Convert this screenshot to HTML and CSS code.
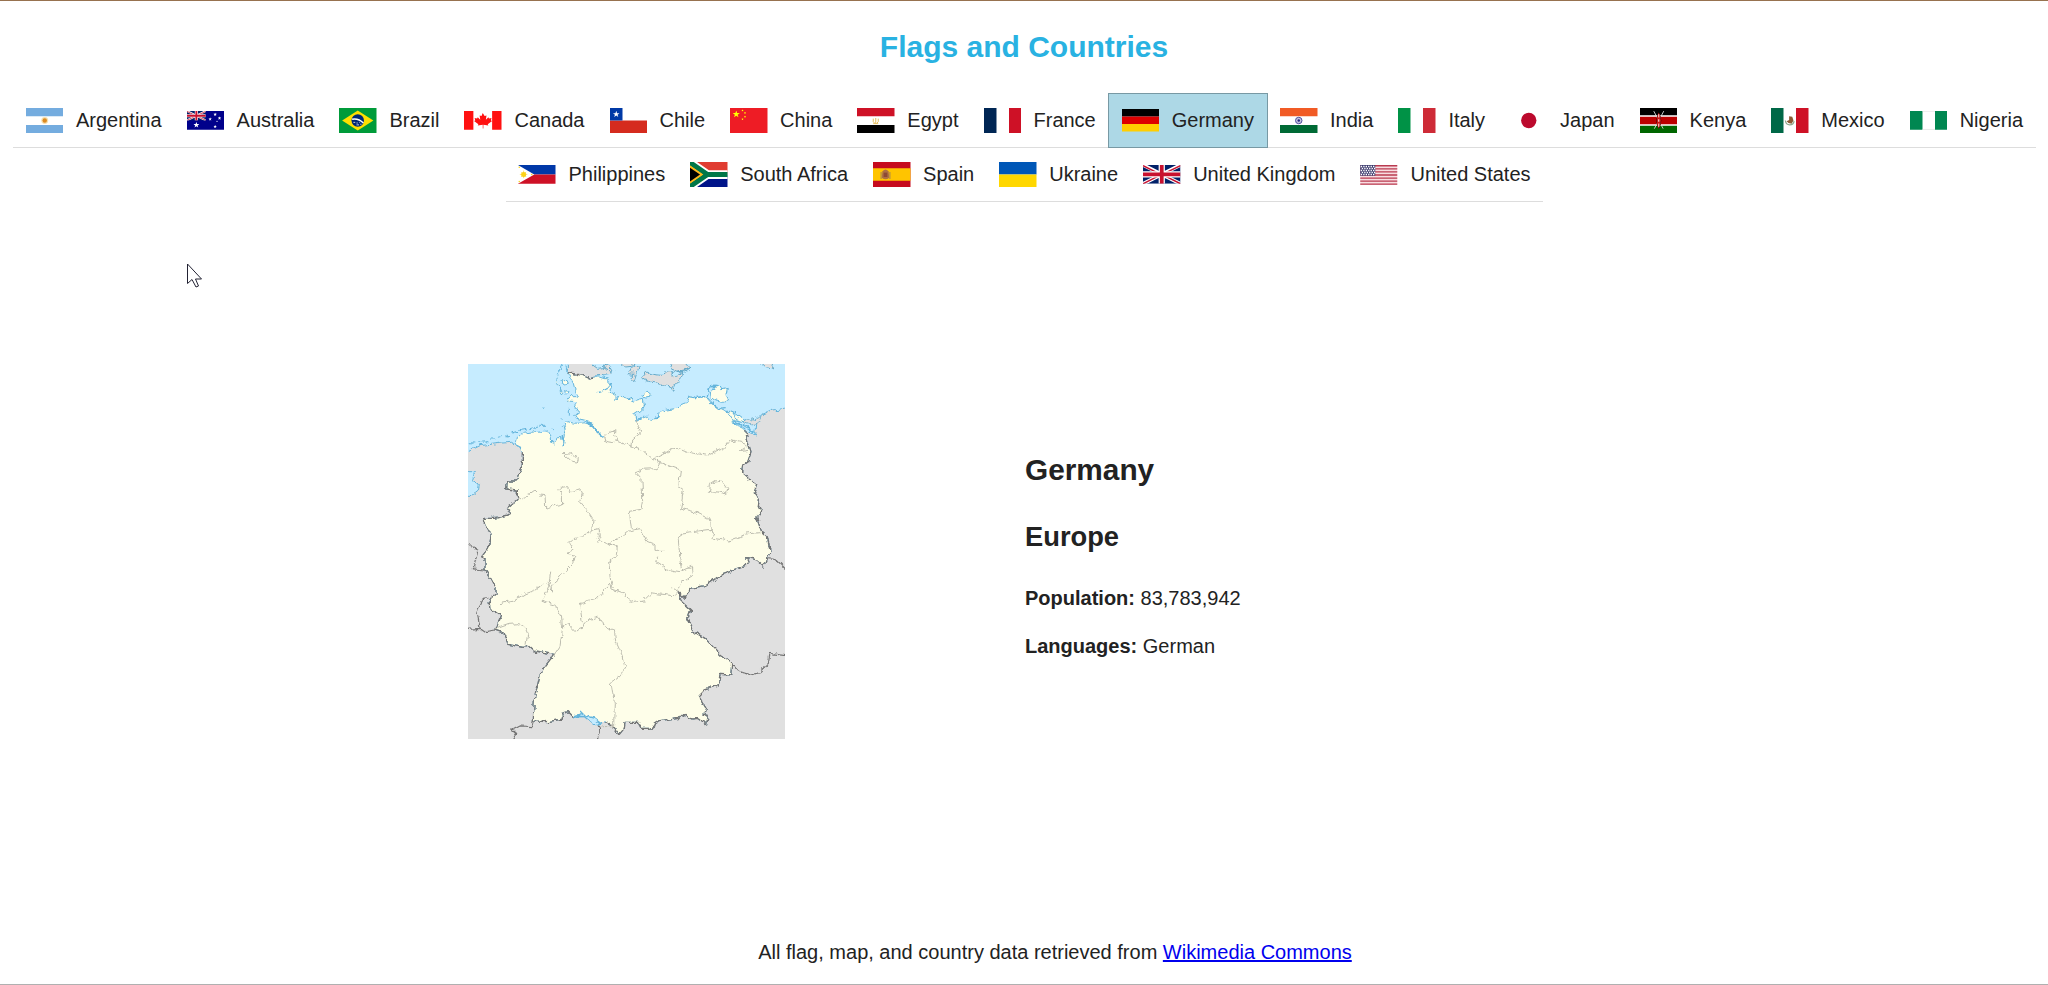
FILE: index.html
```html
<!DOCTYPE html>
<html lang="en">
<head>
<meta charset="utf-8">
<title>Flags and Countries</title>
<link rel="stylesheet" href="styles.css">
</head>
<body>
<svg class="defs" width="0" height="0">
  <symbol id="star" viewBox="-10 -10 20 20"><path d="M0-10 2.4-3.1 9.5-3.1 3.8 1.2 5.9 8.1 0 3.9-5.9 8.1-3.8 1.2-9.5-3.1-2.4-3.1z"/></symbol>
  <symbol id="jack" viewBox="0 0 60 30" preserveAspectRatio="none">
    <path fill="#012169" d="M0 0h60v30H0z"/>
    <path stroke="#fff" stroke-width="6" d="M0 0l60 30M60 0L0 30"/>
    <path stroke="#c8102e" stroke-width="2.4" d="M0 1l29 14.500M31 15.500l29 14.500M60 1L31 15M29 15.500L0 30"/>
    <path stroke="#fff" stroke-width="10" d="M30 0v30M0 15h60"/>
    <path stroke="#c8102e" stroke-width="6" d="M30 0v30M0 15h60"/>
  </symbol>
</svg>
<div class="page">
<header><h1 class="title">Flags and Countries</h1></header>
<nav>
<ul class="countries">
<li class="country"><svg class="flag" viewBox="0 0 60 40"><path fill="#74acdf" d="M0 0h60v40H0z"/><path fill="#fff" d="M0 13h60v14H0z"/><circle cx="30" cy="20" r="5.500" fill="#f8dfab"/><circle cx="30" cy="20" r="3.600" fill="#dc8a21"/></svg><span>Argentina</span></li>
<li class="country"><svg class="flag half" viewBox="0 0 60 30"><path fill="#00008b" d="M0 0h60v30H0z"/><use href="#jack" width="30" height="15"/><g fill="#fff"><use href="#star" x="10" y="17.500" width="10" height="10"/><use href="#star" x="42" y="2.500" width="6" height="6"/><use href="#star" x="34" y="10" width="6" height="6"/><use href="#star" x="49" y="8.500" width="6" height="6"/><use href="#star" x="42" y="22" width="6" height="6"/><circle cx="48" cy="16.500" r="1"/></g></svg><span>Australia</span></li>
<li class="country"><svg class="flag" viewBox="0 0 60 40"><path fill="#009b3a" d="M0 0h60v40H0z"/><path fill="#fedf00" d="M5 20 30 4l25 16-25 16z"/><circle cx="30" cy="20" r="10" fill="#002776"/><path d="M21 18q10-2 18 6" stroke="#fff" stroke-width="2.500" fill="none"/><path d="M23 23h3m2 1h2m-2 3h4m2-1h2m-4-3h1" stroke="#ccd4e3" stroke-width="1.500"/></svg><span>Brazil</span></li>
<li class="country"><svg class="flag half" viewBox="0 0 60 30"><path fill="#fff" d="M0 0h60v30H0z"/><path fill="#f11" d="M0 0h15v30H0zM45 0h15v30H45zM30 3l3 5 3-1-1 7 4-4 1 2 4-1-1 4 2 1-7 5 1 2-8-1v6h-1v-6l-8 1 1-2-7-5 2-1-1-4 4 1 1-2 4 4-1-7 3 1z"/></svg><span>Canada</span></li>
<li class="country"><svg class="flag" viewBox="0 0 60 40"><path fill="#fff" d="M0 0h60v20H0z"/><path fill="#d52b1e" d="M0 20h60v20H0z"/><path fill="#0039a6" d="M0 0h20v20H0z"/><use href="#star" x="4.500" y="4.500" width="11" height="11" fill="#fff"/></svg><span>Chile</span></li>
<li class="country"><svg class="flag" viewBox="0 0 60 40"><path fill="#ee1c25" d="M0 0h60v40H0z"/><g fill="#ff0"><use href="#star" x="4" y="4" width="12" height="12"/><use href="#star" x="18" y="2" width="4" height="4"/><use href="#star" x="22" y="6" width="4" height="4"/><use href="#star" x="22" y="12" width="4" height="4"/><use href="#star" x="18" y="16" width="4" height="4"/></g></svg><span>China</span></li>
<li class="country"><svg class="flag" viewBox="0 0 60 40"><path fill="#fff" d="M0 0h60v40H0z"/><path fill="#ce1126" d="M0 0h60v13H0z"/><path d="M0 27h60v13H0z"/><path d="M26 17v5l2 2M34 17v5l-2 2M30 16v9M26 25h8" stroke="#e5bd5c" stroke-width="1.600" fill="none"/></svg><span>Egypt</span></li>
<li class="country"><svg class="flag" viewBox="0 0 60 40"><path fill="#fff" d="M0 0h60v40H0z"/><path fill="#002654" d="M0 0h20v40H0z"/><path fill="#ce1126" d="M40 0h20v40H40z"/></svg><span>France</span></li>
<li class="country selected"><svg class="flag fifths" viewBox="0 0 60 36"><path d="M0 0h60v12H0z"/><path fill="#d00" d="M0 12h60v12H0z"/><path fill="#ffce00" d="M0 24h60v12H0z"/></svg><span>Germany</span></li>
<li class="country"><svg class="flag" viewBox="0 0 60 40"><path fill="#fff" d="M0 0h60v40H0z"/><path fill="#f15b25" d="M0 0h60v13H0z"/><path fill="#006a35" d="M0 27h60v13H0z"/><circle cx="30" cy="20" r="5.200" fill="#c5c3df" stroke="#4a4a9c" stroke-width="1.500"/><circle cx="30" cy="20" r="2" fill="#262680"/></svg><span>India</span></li>
<li class="country"><svg class="flag" viewBox="0 0 60 40"><path fill="#fff" d="M0 0h60v40H0z"/><path fill="#009246" d="M0 0h20v40H0z"/><path fill="#ce2b37" d="M40 0h20v40H40z"/></svg><span>Italy</span></li>
<li class="country"><svg class="flag" viewBox="0 0 60 40"><path fill="#fff" d="M0 0h60v40H0z"/><circle cx="30" cy="20" r="12.300" fill="#bc0a2d"/></svg><span>Japan</span></li>
<li class="country"><svg class="flag" viewBox="0 0 60 40"><path d="M0 0h60v13H0z"/><path fill="#fff" d="M0 11.500h60v17H0z"/><path fill="#b00" d="M0 14h60v12H0z"/><path fill="#060" d="M0 28.500h60V40H0z"/><path d="M22 5l15 28M38 5L23 33" stroke="#ddd" stroke-width="1.400"/><path d="M30 7q4 6 4 13t-4 13q-4-6-4-13t4-13z"/><path fill="#c81414" d="M30 7q3.500 6 3.500 13t-3.500 13q-3.500-6-3.500-13t3.500-13z"/><path d="M30 10v5m0 3v4m0 3v5" stroke="#fff" stroke-width="1.500"/></svg><span>Kenya</span></li>
<li class="country"><svg class="flag" viewBox="0 0 60 40"><path fill="#fff" d="M0 0h60v40H0z"/><path fill="#006847" d="M0 0h20v40H0z"/><path fill="#ce1126" d="M40 0h20v40H40z"/><path fill="#8b5a34" d="M29 13l5 1 2 6-3 5-5-1-3-3 4-2z"/><path d="M23 20q1 7 7 7t7-6" fill="none" stroke="#8da78c" stroke-width="2"/></svg><span>Mexico</span></li>
<li class="country"><svg class="flag half" viewBox="0 0 60 30"><path fill="#fff" d="M0 0h60v30H0z"/><path fill="#008751" d="M0 0h20v30H0zM40 0h20v30H40z"/><path d="M20 .5h20M20 29.500h20" stroke="#ddd"/></svg><span>Nigeria</span></li>
<li class="country"><svg class="flag half" viewBox="0 0 60 30"><path fill="#0038a8" d="M0 0h60v15H0z"/><path fill="#ce1126" d="M0 15h60v15H0z"/><path fill="#fff" d="M0 0l26 15L0 30z"/><g fill="#fcd116"><circle cx="9" cy="15" r="4"/><path d="M9 9v12M3 15h12M5 11l8 8M13 11l-8 8" stroke="#fcd116"/><circle cx="2" cy="3.500" r="1.200"/><circle cx="2" cy="26.500" r="1.200"/><circle cx="22" cy="15" r="1.200"/></g></svg><span>Philippines</span></li>
<li class="country"><svg class="flag" viewBox="0 0 60 40"><path fill="#e03c31" d="M0 0h60v20H0z"/><path fill="#001489" d="M0 20h60v20H0z"/><path d="M-4-2 28 20h32M-4 42 28 20" fill="none" stroke="#fff" stroke-width="14"/><path fill="#ffb81c" d="M0 4l23 16L0 36z"/><path d="M-4-2 28 20h32M-4 42 28 20" fill="none" stroke="#007749" stroke-width="8"/><path fill="#ffb81c" d="M0 5.500 21 20 0 34.500z"/><path d="M0 9l16 11L0 31z"/></svg><span>South Africa</span></li>
<li class="country"><svg class="flag" viewBox="0 0 60 40"><path fill="#c60b1e" d="M0 0h60v40H0z"/><path fill="#ffc400" d="M0 10h60v20H0z"/><path fill="#ad7043" d="M15 15q5-6 10 0l1 10q-6 5-12 0z"/><path d="M13 16v11M27 16v11" stroke="#b38d45" stroke-width="2"/><path fill="#8d4a34" d="M17 17h6v7h-6z"/></svg><span>Spain</span></li>
<li class="country"><svg class="flag" viewBox="0 0 60 40"><path fill="#0057b7" d="M0 0h60v20H0z"/><path fill="#ffd700" d="M0 20h60v20H0z"/></svg><span>Ukraine</span></li>
<li class="country"><svg class="flag half" viewBox="0 0 60 30"><use href="#jack" width="60" height="30"/></svg><span>United Kingdom</span></li>
<li class="country"><svg class="flag states" viewBox="0 0 74 40"><path fill="#f8dce0" d="M0 0h74v40H0z"/><path d="M0 1.500h74M0 7.600h74M0 13.700h74M0 20h74M0 26.100h74M0 32.200h74M0 38.400h74" stroke="#b93b50" stroke-width="2.600"/><path fill="#3c3b6e" d="M0 0h30v21.500H0z"/><path d="M1 3h29M3 7h27M1 11h29M3 15h27M1 19h29" stroke="#fff" stroke-width="2.600" stroke-dasharray="2.700 2.200"/></svg><span>United States</span></li>
</ul>
</nav>
<main class="details">
<div class="map-column">
<svg class="map" viewBox="24 27 951 1125">
  <defs>
    <filter id="rough" x="0" y="0" width="1" height="1" filterUnits="objectBoundingBox" color-interpolation-filters="sRGB"><feTurbulence type="fractalNoise" baseFrequency=".055" numOctaves="3" seed="4"/><feColorMatrix values="1 0 0 0 0 0 1 0 0 0 0 0 1 0 0 0 0 0 0 1" result="noise"/><feDisplacementMap in="SourceGraphic" in2="noise" scale="17" xChannelSelector="R" yChannelSelector="G"/></filter>
  </defs>
  <path fill="#e0e0e0" d="M24 27h951v1125H24z"/>
  <g filter="url(#rough)" stroke-linejoin="round">
    <path fill="#e0e0e0" d="M-20-20h1050v1220H-20z"/>
    <g fill="#c6ecff" stroke="#63b4db" stroke-width="3">
      <path d="M-20-20H1020V153L975 160 940 165 905 181 890 207 887 240 850 225 600 400 187 290 175 275 155 262 125 264 95 268 60 272 24 290-20 310z"/>
      <path d="M0 350H44L37 378 58 388 55 405 24 430H0z"/>
    </g>
    <g fill="#e0e0e0" stroke="#63a9c9" stroke-width="3">
      <path d="M325-10V53L385 69 405 63 430 61 455 57 450 45 432 38 412 40 398 30 400-10z"/>
      <path d="M430 27l18 4 10 18-20-8zM478 18l18 18 20-2 15-12zM527 32l11 0-16 48-8-8 8-14-18-2 8-16zM545 69l15-18 22 8 22 2 12-10 22-1-4 13 16-2 18-12-4 20-18 18-8 19-8-14-26-3-20-6-32-8zM622 18l12 24 20 8 22-4 16-6-20-22zM655 48l38-8-16 11zM897 20l20 18 20 4 5-22z"/>
    </g>
    <path fill="#e0e0e0" stroke="#63a9c9" stroke-width="2.500" d="M850 194l20 2 37-15-12 24-24 5-20-8z"/>
    <path fill="#fefee9" stroke="#63b4db" stroke-width="3" d="M323 53 345 57 365 60 385 69 400 66 420 66 440 72 452 85 455 100 447 112 468 118 468 138 475 125 495 125 520 138 550 130 553 150 545 165 525 178 528 200 545 190 565 183 575 193 590 190 600 172 620 165 650 160 660 150 680 142 688 120 705 128 740 125 755 142 775 158 795 168 815 175 820 200 835 212 857 222 862 255 873 290 862 320 848 330 845 350 870 372 890 388 882 410 898 430 895 455 903 470 890 490 905 530 922 545 928 575 930 590 918 622 908 633 885 612 860 608 865 620 855 632 790 655 735 692 690 700 672 727 655 710 665 740 692 765 683 790 705 832 735 850 780 898 815 925 812 960 780 958 775 990 735 1002 715 1022 737 1058 732 1078 745 1082 740 1110 715 1090 695 1092 665 1078 655 1090 600 1100 570 1120 545 1120 535 1102 495 1102 493 1120 478 1138 460 1115 435 1100 415 1112 375 1085 340 1085 325 1070 305 1075 308 1092 265 1100 220 1098 223 1030 240 960 250 940 283 898 225 888 205 870 190 877 143 868 127 832 107 825 122 782 90 760 87 735 108 715 108 700 92 670 75 645 75 615 65 605 85 580 90 565 93 540 78 510 70 490 105 490 145 480 152 465 140 460 172 433 172 405 140 402 142 378 172 378 187 330 187 292 180 277 168 271 172 250 190 235 260 225 270 240 272 262 285 267 292 245 305 245 310 272 316 240 310 215 320 200 350 205 380 203 385 198 350 190 344 180 355 172 342 152 352 140 320 138 330 125 355 125 345 105 340 85z"/>
    <g fill="#fefee9" stroke="#63b4db" stroke-width="3">
      <path d="M550 112l10-5 16 15-18 4-12-3zM762 90l15 4 5 10 20-4-4 20 8 14-16 8-22-4-15-10 2-18zM800 168l28 8 25 18-8 8-28-8z"/>
      <path d="M303 78l15-2 4 9-16 3zM300 98l8 18-6 4zM314 106l8-2 6 8-12 2zM292 62l-2 24 6 10M318 32l4 18M306 30l-14 28"/>
      <path d="M24 263l22 1M55 262l30-2M88 252l15 0M113 247l15-3M137 242l6-4 3 5zM153 235l18-6M178 227l22-4M208 221l24-5M238 214l20 0M275 222l6 2M250 156l6 1M303 190l4 4M328 160v22"/>
    </g>
    <path fill="none" stroke="#63b4db" stroke-width="7" d="M375 201l20 8 16 20 20 17"/>
    <path fill="none" stroke="#63b4db" stroke-width="4" d="M412 114l28-12 15-18M310 240v35M527 198l14-10M586 192l10-16M742 124l8-28 22-6M685 125l18 3 35-4M750 140l25 20 25-2M808 168l18 12 8 20M815 200l34 12 38 20"/>
    <path fill="none" stroke="#747474" stroke-width="4" d="M323 53 345 57 365 60 385 69 400 66M857 222 862 255 873 290 862 320 848 330 845 350 870 372 890 388 882 410 898 430 895 455 903 470 890 490 905 530 922 545 928 575 930 590 918 622 908 633 885 612 860 608 865 620 855 632 790 655 735 692 690 700 672 727 655 710 665 740 692 765 683 790 705 832 735 850 780 898 815 925 812 960 780 958 775 990 735 1002 715 1022 737 1058 732 1078 745 1082 740 1110 715 1090 695 1092 665 1078 655 1090 600 1100 570 1120 545 1120 535 1102 495 1102 493 1120 478 1138 460 1115 435 1100M340 1085 325 1070 305 1075 308 1092 265 1100 220 1098 223 1030 240 960 250 940 283 898 225 888 205 870 190 877 143 868 127 832 107 825 122 782 90 760 87 735 108 715 108 700 92 670 75 645 75 615 65 605 85 580 90 565 93 540 78 510 70 490 105 490 145 480 152 465 140 460 172 433 172 405 140 402 142 378 172 378 187 330 187 292"/>
    <path fill="none" stroke="#747474" stroke-width="3.500" d="M0 568l30 2 24 16-14 56 35 3M87 727l-17 3-20 35 10 55 15 10 32-5M0 825l60-5M220 1098l-5 17-35-2-22 12 12 10-20 30M415 1112l5 18-15 40M815 925l20 23 30 10 35-8 25-25 5-30 70 10M918 610l32 5 25 25 30 10"/>
    <g fill="none" stroke="#bcbcaf" stroke-width="3">
      <path d="M433 243l20-14 15-8-2 18 8 16-12 8-24-4zM310 295l20 2 25 14-3 10-17-2zM748 412l3-24 16-10 18-3 18 25-3 17-20-5-14-2z"/>
      <path d="M473 255l40 18 30 12 34 28 30-14 38-22 34 14 60 10 50-20 22-27 42 10 8 14-20 12 24-4M513 273l2-18 28-22-15-38M577 313l24 10 60 22-5 52 14 10-8 52 45 12 45 24 2 28-92 11-7 20 5 60 4 24M601 323l-12 18-45 2-20 8 22 24 2 60-5 28-35 6 6 50"/>
      <path d="M172 433l25-8 28-20 12 12 18 2 2 40 48-12-2-40-10-2 8-8 22-2 8 18 30-10 6 10-8 28 20 24 20 30-4 30-24 20-32 6-12 12 12 20-18 12 20 4 4 12-8 15-20 20-22 26-20 18 4 22-18-34-38 28-28 10-35 22-40 8"/>
      <path d="M395 525l22-4 4 20-8 16 28 8 40-18 24-18 12-4 24-4 20 38 24 10 0 20 30 0M440 565l32 10-4 30-22 15 6 60 4 22 35 12 18 28 45-8 20-20 65 8 20-20 4-20 35-20-4-28-34 16-35-6-38-24 6-15M752 520l8 30 50 8 28-10 20-14 40-4"/>
      <path d="M272 650l-6 44-20 45 40 12 18 30 4 40-8 52-20 30M107 822l40-14 30-2 18 12 8 18-5 34M304 812l20-8 20 22 25-10-10-70 50-14 25-30 22-20M365 818l20-24 30-8 16 24 16 10 16 6 4 32 18 40 10 40-14 22-28 22 10 64-2 65-40 6M637 698l18 12"/>
    </g>
    <path fill="#c6ecff" stroke="#63b4db" stroke-width="4" d="M360 1065l18 18 26 6 24 18-26 2-30-25-30 2 25-8z"/>
  </g>
</svg>
</div>
<section class="facts">
<h2 class="name">Germany</h2>
<h3 class="region">Europe</h3>
<p class="fact"><b>Population:</b> 83,783,942</p>
<p class="fact"><b>Languages:</b> German</p>
</section>
</main>
<footer class="credit">All flag, map, and country data retrieved from <a href="#">Wikimedia Commons</a></footer>
</div>
<svg class="pointer" viewBox="0 0 16 25"><path d="M.5 1v19.500l4.500-4 4 7.500 2.500-1-3-7h6z" fill="#fff" stroke="#222233"/></svg>
</body>
</html>
```
FILE: styles.css
```css
* { box-sizing: border-box; }
body { margin: 0; background: #fff; color: #222; font: 20px/23px "Liberation Sans", Arial, sans-serif; }
.defs { position: absolute; }
.page { height: 985px; display: flex; flex-direction: column; border-top: 1px solid #97724f; border-bottom: 1px solid #b0b0b0; overflow: hidden; }
.title { margin: 29px 0 0; font-size: 30px; line-height: 34px; text-align: center; color: #29b2e2; }
.countries { display: flex; flex-wrap: wrap; justify-content: center; margin: 29px 11.5px 0 12.5px; padding: 0; list-style: none; }
.country { display: flex; align-items: center; gap: 12.5px; padding: 15px 12.5px; height: 54px; border-bottom: 1px solid #ddd; white-space: nowrap; }
.selected { height: 55px; background: #add8e6; border: 1px solid #7899a4; }
.country:not(.selected):nth-child(-n+15) { height: 55px; padding-top: 16px; }
.flag { display: block; flex: none; width: 37.5px; height: 25px; }
.half { height: 18.75px; }
.fifths { height: 22.5px; }
.states { height: 20px; }
.details { display: flex; margin-top: 162px; }
.map-column { width: 1025px; padding-left: 468px; }
.map { display: block; width: 317px; height: 375px; }
.facts { padding-top: 89px; }
.name { margin: 0; font-size: 29.8px; line-height: 34px; }
.region { margin: 34px 0 0; font-size: 27.3px; line-height: 32px; }
.fact { margin: 34px 0 0; }
.fact + .fact { margin-top: 25px; }
.credit { margin-top: auto; padding: 0 0 20px 62px; text-align: center; }
.credit a { color: #00e; }
.pointer { position: absolute; left: 187px; top: 263px; width: 16px; height: 25px; }
```
